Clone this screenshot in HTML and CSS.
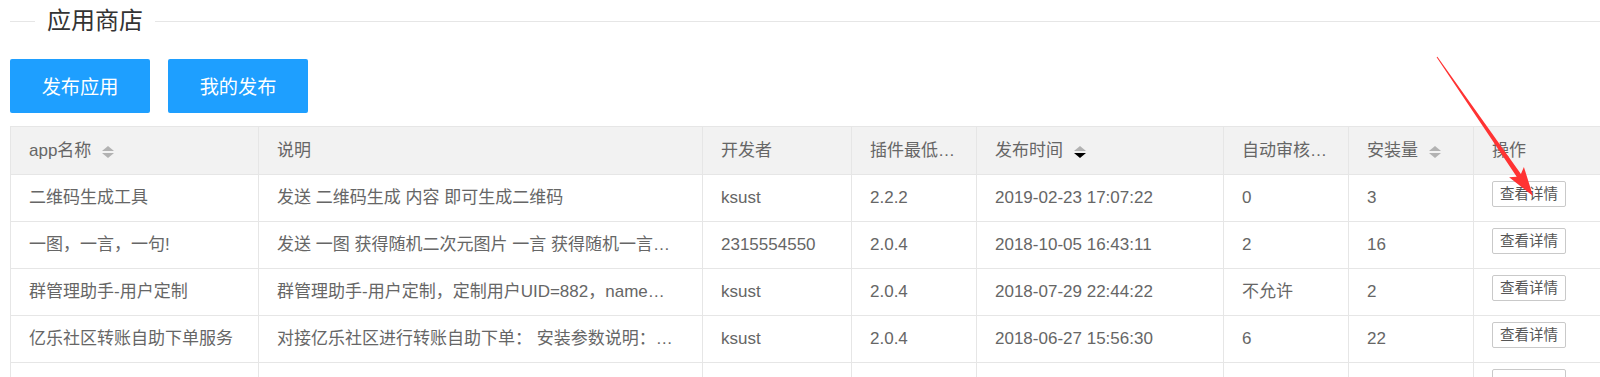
FILE: index.html
```html
<!DOCTYPE html>
<html lang="zh-CN">
<head>
<meta charset="utf-8">
<title>应用商店</title>
<link rel="stylesheet" href="styles.css">
</head>
<body>
<div class="page">
  <div class="field-title">
    <span class="field-line short"></span>
    <h2>应用商店</h2>
    <span class="field-line"></span>
  </div>

  <div class="actions">
    <button class="btn">发布应用</button>
    <button class="btn">我的发布</button>
  </div>

  <div class="table-wrap">
    <table class="data-table">
      <colgroup>
        <col class="c-name">
        <col class="c-desc">
        <col class="c-dev">
        <col class="c-ver">
        <col class="c-time">
        <col class="c-auto">
        <col class="c-inst">
        <col class="c-op">
      </colgroup>
      <thead>
        <tr>
          <th><div class="cell">app名称<span class="sort"><i class="up"></i><i class="down"></i></span></div></th>
          <th><div class="cell">说明</div></th>
          <th><div class="cell">开发者</div></th>
          <th><div class="cell">插件最低…</div></th>
          <th><div class="cell">发布时间<span class="sort desc"><i class="up"></i><i class="down"></i></span></div></th>
          <th><div class="cell">自动审核…</div></th>
          <th><div class="cell">安装量<span class="sort"><i class="up"></i><i class="down"></i></span></div></th>
          <th><div class="cell">操作</div></th>
        </tr>
      </thead>
      <tbody>
        <tr>
          <td><div class="cell">二维码生成工具</div></td>
          <td><div class="cell">发送 二维码生成 内容 即可生成二维码</div></td>
          <td><div class="cell">ksust</div></td>
          <td><div class="cell">2.2.2</div></td>
          <td><div class="cell">2019-02-23 17:07:22</div></td>
          <td><div class="cell">0</div></td>
          <td><div class="cell">3</div></td>
          <td><div class="cell"><button class="detail-btn">查看详情</button></div></td>
        </tr>
        <tr>
          <td><div class="cell">一图，一言，一句!</div></td>
          <td><div class="cell">发送 一图 获得随机二次元图片 一言 获得随机一言…</div></td>
          <td><div class="cell">2315554550</div></td>
          <td><div class="cell">2.0.4</div></td>
          <td><div class="cell">2018-10-05 16:43:11</div></td>
          <td><div class="cell">2</div></td>
          <td><div class="cell">16</div></td>
          <td><div class="cell"><button class="detail-btn">查看详情</button></div></td>
        </tr>
        <tr>
          <td><div class="cell">群管理助手-用户定制</div></td>
          <td><div class="cell">群管理助手-用户定制，定制用户UID=882，name…</div></td>
          <td><div class="cell">ksust</div></td>
          <td><div class="cell">2.0.4</div></td>
          <td><div class="cell">2018-07-29 22:44:22</div></td>
          <td><div class="cell">不允许</div></td>
          <td><div class="cell">2</div></td>
          <td><div class="cell"><button class="detail-btn">查看详情</button></div></td>
        </tr>
        <tr>
          <td><div class="cell">亿乐社区转账自助下单服务</div></td>
          <td><div class="cell">对接亿乐社区进行转账自助下单： 安装参数说明：…</div></td>
          <td><div class="cell">ksust</div></td>
          <td><div class="cell">2.0.4</div></td>
          <td><div class="cell">2018-06-27 15:56:30</div></td>
          <td><div class="cell">6</div></td>
          <td><div class="cell">22</div></td>
          <td><div class="cell"><button class="detail-btn">查看详情</button></div></td>
        </tr>
        <tr class="row-partial">
          <td><div class="cell"></div></td>
          <td><div class="cell"></div></td>
          <td><div class="cell"></div></td>
          <td><div class="cell"></div></td>
          <td><div class="cell"></div></td>
          <td><div class="cell"></div></td>
          <td><div class="cell"></div></td>
          <td><div class="cell"><button class="detail-btn empty" aria-label="查看详情"></button></div></td>
        </tr>
      </tbody>
    </table>
  </div>

  <svg class="annotation" width="1600" height="377" viewBox="0 0 1600 377" aria-hidden="true">
    <polygon points="1436.6,57.3 1516.7,176.8 1509.1,177.2 1533,196 1523.9,167.0 1520.9,174.0 1437.4,56.7" fill="#ff3333"/>
  </svg>
</div>
</body>
</html>
```

FILE: styles.css
```css
html, body {
  margin: 0;
  padding: 0;
  background: #fff;
  overflow: hidden;
}

body {
  font-family: "Liberation Sans", "Noto Sans CJK SC", sans-serif;
  color: #666;
}

.page {
  position: relative;
  width: 1600px;
  height: 377px;
  overflow: hidden;
}

/* fieldset-like title */
.field-title {
  display: flex;
  align-items: center;
  height: 42px;
  margin-left: 10px;
}

.field-line {
  flex: 1;
  height: 1px;
  background: #e6e6e6;
}

.field-line.short {
  flex: 0 0 25px;
}

.field-title h2 {
  margin: 0;
  padding: 0 12px;
  font-size: 24px;
  font-weight: normal;
  line-height: 42px;
  color: #333;
}

/* action buttons */
.actions {
  display: flex;
  gap: 18px;
  margin: 17px 0 0 10px;
}

.btn {
  width: 140px;
  height: 54px;
  padding: 0;
  border: 0;
  border-radius: 2px;
  background: #1e9fff;
  color: #fff;
  font-family: inherit;
  font-size: 19.2px;
  cursor: pointer;
}

/* table */
.table-wrap {
  margin: 13px 0 0 10px;
  overflow: hidden;
}

.data-table {
  border-collapse: collapse;
  table-layout: fixed;
  width: 1663px;
}

.c-name { width: 248px; }
.c-desc { width: 444px; }
.c-dev  { width: 149px; }
.c-ver  { width: 125px; }
.c-time { width: 247px; }
.c-auto { width: 125px; }
.c-inst { width: 125px; }
.c-op   { width: 200px; }

.data-table th,
.data-table td {
  border: 1px solid #e6e6e6;
  padding: 6px 0;
  font-weight: normal;
  text-align: left;
  vertical-align: top;
}

.data-table th {
  background: #f2f2f2;
}

.cell {
  height: 34px;
  line-height: 34px;
  padding: 0 18px;
  font-size: 17px;
  white-space: nowrap;
  overflow: hidden;
  text-overflow: ellipsis;
}

.data-table th .cell {
  height: 35px;
  line-height: 35px;
}

/* sort icon */
.sort {
  display: inline-flex;
  flex-direction: column;
  gap: 2px;
  margin-left: 11px;
  vertical-align: middle;
}

.sort i {
  display: block;
  width: 0;
  height: 0;
  border-left: 6px solid transparent;
  border-right: 6px solid transparent;
}

.sort .up {
  border-bottom: 5px solid #b2b2b2;
}

.sort .down {
  border-top: 5px solid #b2b2b2;
}

.sort.desc .down {
  border-top-color: #000;
}

/* detail button */
.detail-btn {
  height: 26px;
  line-height: 24px;
  padding: 0 7px;
  border: 1px solid #c9c9c9;
  border-radius: 2px;
  background: #fff;
  color: #555;
  font-family: inherit;
  font-size: 14.5px;
  vertical-align: top;
  cursor: pointer;
}

.detail-btn.empty {
  width: 74px;
}

/* red annotation arrow over content */
.annotation {
  position: absolute;
  top: 0;
  left: 0;
  pointer-events: none;
}
```
